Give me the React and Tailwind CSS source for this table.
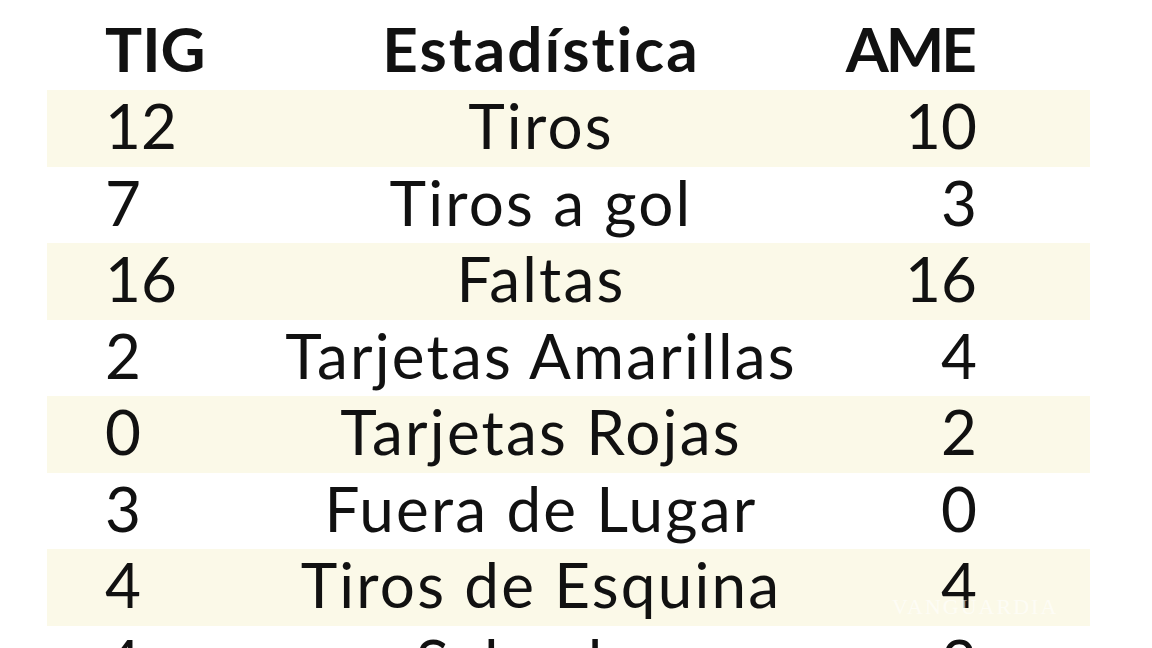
const rows = [
  ['12', 'Tiros', '10'],
  ['7', 'Tiros a gol', '3'],
  ['16', 'Faltas', '16'],
  ['2', 'Tarjetas Amarillas', '4'],
  ['0', 'Tarjetas Rojas', '2'],
  ['3', 'Fuera de Lugar', '0'],
  ['4', 'Tiros de Esquina', '4'],
  ['4', 'Salvadas', '3'],
]

export default function App() {
  return (
    <div className="relative w-[1152px] h-[648px] overflow-hidden bg-white text-[#111] font-['Lato',sans-serif] whitespace-nowrap">
      <div className="h-[90px] flex items-end pl-[105px] pr-[175px] pb-[11px] text-[62px] leading-none font-bold">
        <div className="w-[200px]">TIG</div>
        <div className="flex-1 text-center tracking-[2px]">Estadística</div>
        <div className="w-[200px] text-right tracking-[-3px] pr-[3px]">AME</div>
      </div>
      {rows.map((r, i) => (
        <div
          key={i}
          className={`ml-[47px] w-[1043px] h-[76.5px] flex items-center pl-[58px] pr-[113px] pb-[6px] text-[62px] leading-none ${i % 2 === 0 ? 'bg-[#fbf9e8]' : ''}`}
        >
          <div className="w-[200px]">{r[0]}</div>
          <div className="flex-1 text-center tracking-[2.2px]">{r[1]}</div>
          <div className="w-[200px] text-right">{r[2]}</div>
        </div>
      ))}
      <div className="absolute left-[892px] top-[590px] text-[22px] tracking-[2px] text-white/60 font-['Liberation_Serif',serif]">VANGUARDIA</div>
    </div>
  )
}
